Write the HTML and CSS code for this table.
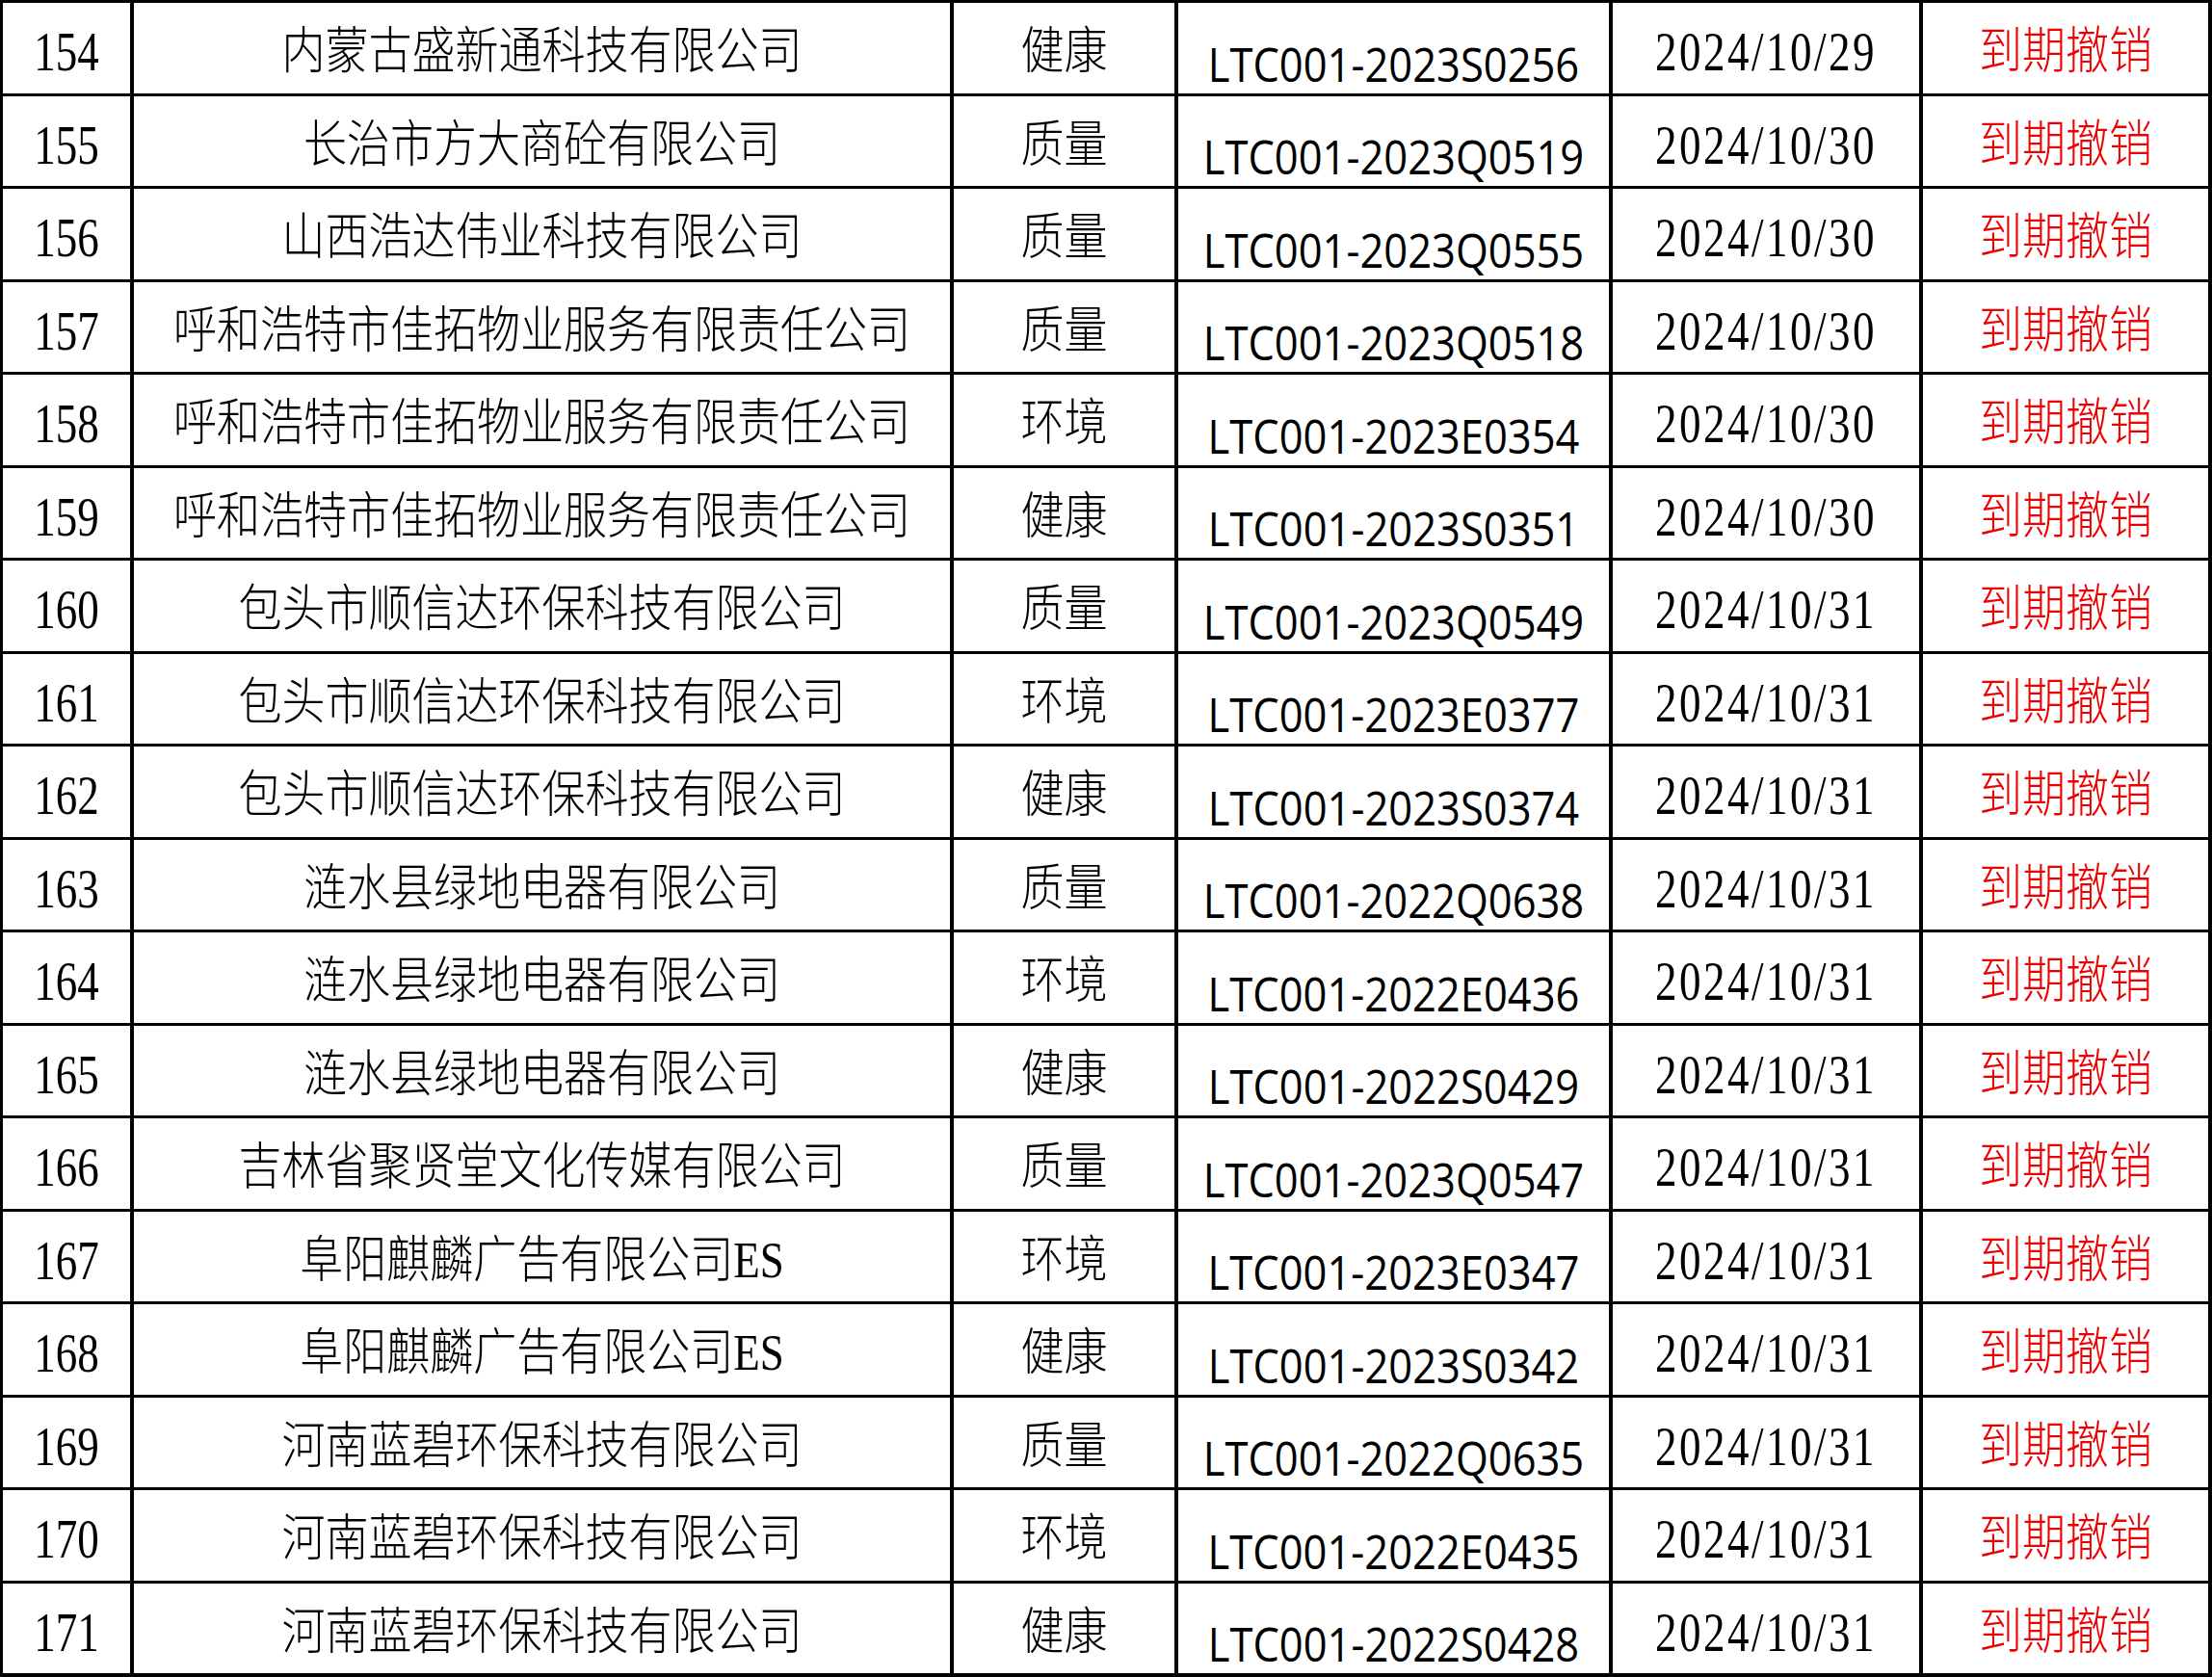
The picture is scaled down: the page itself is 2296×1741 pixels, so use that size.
FILE: index.html
```html
<!DOCTYPE html>
<html lang="zh-CN">
<head>
<meta charset="utf-8">
<title>到期撤销名单</title>
<link rel="stylesheet" href="styles.css">
</head>
<body>
<div class="sheet">
  <div class="c num"><span>154</span></div><div class="c name"><span>内蒙古盛新通科技有限公司</span></div><div class="c cat"><span>健康</span></div><div class="c code"><span>LTC001-2023S0256</span></div><div class="c date"><span>2024/10/29</span></div><div class="c st"><span>到期撤销</span></div>
  <div class="c num"><span>155</span></div><div class="c name"><span>长治市方大商砼有限公司</span></div><div class="c cat"><span>质量</span></div><div class="c code"><span>LTC001-2023Q0519</span></div><div class="c date"><span>2024/10/30</span></div><div class="c st"><span>到期撤销</span></div>
  <div class="c num"><span>156</span></div><div class="c name"><span>山西浩达伟业科技有限公司</span></div><div class="c cat"><span>质量</span></div><div class="c code"><span>LTC001-2023Q0555</span></div><div class="c date"><span>2024/10/30</span></div><div class="c st"><span>到期撤销</span></div>
  <div class="c num"><span>157</span></div><div class="c name"><span>呼和浩特市佳拓物业服务有限责任公司</span></div><div class="c cat"><span>质量</span></div><div class="c code"><span>LTC001-2023Q0518</span></div><div class="c date"><span>2024/10/30</span></div><div class="c st"><span>到期撤销</span></div>
  <div class="c num"><span>158</span></div><div class="c name"><span>呼和浩特市佳拓物业服务有限责任公司</span></div><div class="c cat"><span>环境</span></div><div class="c code"><span>LTC001-2023E0354</span></div><div class="c date"><span>2024/10/30</span></div><div class="c st"><span>到期撤销</span></div>
  <div class="c num"><span>159</span></div><div class="c name"><span>呼和浩特市佳拓物业服务有限责任公司</span></div><div class="c cat"><span>健康</span></div><div class="c code"><span>LTC001-2023S0351</span></div><div class="c date"><span>2024/10/30</span></div><div class="c st"><span>到期撤销</span></div>
  <div class="c num"><span>160</span></div><div class="c name"><span>包头市顺信达环保科技有限公司</span></div><div class="c cat"><span>质量</span></div><div class="c code"><span>LTC001-2023Q0549</span></div><div class="c date"><span>2024/10/31</span></div><div class="c st"><span>到期撤销</span></div>
  <div class="c num"><span>161</span></div><div class="c name"><span>包头市顺信达环保科技有限公司</span></div><div class="c cat"><span>环境</span></div><div class="c code"><span>LTC001-2023E0377</span></div><div class="c date"><span>2024/10/31</span></div><div class="c st"><span>到期撤销</span></div>
  <div class="c num"><span>162</span></div><div class="c name"><span>包头市顺信达环保科技有限公司</span></div><div class="c cat"><span>健康</span></div><div class="c code"><span>LTC001-2023S0374</span></div><div class="c date"><span>2024/10/31</span></div><div class="c st"><span>到期撤销</span></div>
  <div class="c num"><span>163</span></div><div class="c name"><span>涟水县绿地电器有限公司</span></div><div class="c cat"><span>质量</span></div><div class="c code"><span>LTC001-2022Q0638</span></div><div class="c date"><span>2024/10/31</span></div><div class="c st"><span>到期撤销</span></div>
  <div class="c num"><span>164</span></div><div class="c name"><span>涟水县绿地电器有限公司</span></div><div class="c cat"><span>环境</span></div><div class="c code"><span>LTC001-2022E0436</span></div><div class="c date"><span>2024/10/31</span></div><div class="c st"><span>到期撤销</span></div>
  <div class="c num"><span>165</span></div><div class="c name"><span>涟水县绿地电器有限公司</span></div><div class="c cat"><span>健康</span></div><div class="c code"><span>LTC001-2022S0429</span></div><div class="c date"><span>2024/10/31</span></div><div class="c st"><span>到期撤销</span></div>
  <div class="c num"><span>166</span></div><div class="c name"><span>吉林省聚贤堂文化传媒有限公司</span></div><div class="c cat"><span>质量</span></div><div class="c code"><span>LTC001-2023Q0547</span></div><div class="c date"><span>2024/10/31</span></div><div class="c st"><span>到期撤销</span></div>
  <div class="c num"><span>167</span></div><div class="c name"><span>阜阳麒麟广告有限公司ES</span></div><div class="c cat"><span>环境</span></div><div class="c code"><span>LTC001-2023E0347</span></div><div class="c date"><span>2024/10/31</span></div><div class="c st"><span>到期撤销</span></div>
  <div class="c num"><span>168</span></div><div class="c name"><span>阜阳麒麟广告有限公司ES</span></div><div class="c cat"><span>健康</span></div><div class="c code"><span>LTC001-2023S0342</span></div><div class="c date"><span>2024/10/31</span></div><div class="c st"><span>到期撤销</span></div>
  <div class="c num"><span>169</span></div><div class="c name"><span>河南蓝碧环保科技有限公司</span></div><div class="c cat"><span>质量</span></div><div class="c code"><span>LTC001-2022Q0635</span></div><div class="c date"><span>2024/10/31</span></div><div class="c st"><span>到期撤销</span></div>
  <div class="c num"><span>170</span></div><div class="c name"><span>河南蓝碧环保科技有限公司</span></div><div class="c cat"><span>环境</span></div><div class="c code"><span>LTC001-2022E0435</span></div><div class="c date"><span>2024/10/31</span></div><div class="c st"><span>到期撤销</span></div>
  <div class="c num"><span>171</span></div><div class="c name"><span>河南蓝碧环保科技有限公司</span></div><div class="c cat"><span>健康</span></div><div class="c code"><span>LTC001-2022S0428</span></div><div class="c date"><span>2024/10/31</span></div><div class="c st"><span>到期撤销</span></div>
</div>
</body>
</html>
```

FILE: styles.css
```css
html, body {
  margin: 0;
  padding: 0;
  background: #ffffff;
}

.sheet {
  box-sizing: border-box;
  width: 2296px;
  height: 1741px;
  background: #000000;
  padding: 3px 4px 4px 3px;
  display: grid;
  grid-template-columns: 132px 847px 229px 447px 318px 296px;
  grid-template-rows: repeat(18, 1fr);
  column-gap: 4px;
  row-gap: 3px;
  overflow: hidden;
}

.c {
  background: #ffffff;
  display: flex;
  align-items: center;
  justify-content: center;
  padding-top: 10px;
  box-sizing: border-box;
  color: #000000;
  white-space: nowrap;
  font-family: "Liberation Serif", "Noto Sans CJK SC", serif;
  font-size: 45px;
  line-height: 1;
  font-weight: 300;
}

.c span {
  display: inline-block;
  transform: scaleY(1.15);
}

.num span,
.date span {
  font-weight: 400;
  transform: scaleY(1.25);
}

.date span {
  letter-spacing: 2.5px;
}

.code {
  padding-top: 33px;
  font-family: "Open Sans", "Noto Sans", sans-serif;
  font-size: 43.5px;
  font-weight: 400;
}

.code span {
  transform: scaleY(1.15);
}

.st {
  color: #ee0000;
}
```
